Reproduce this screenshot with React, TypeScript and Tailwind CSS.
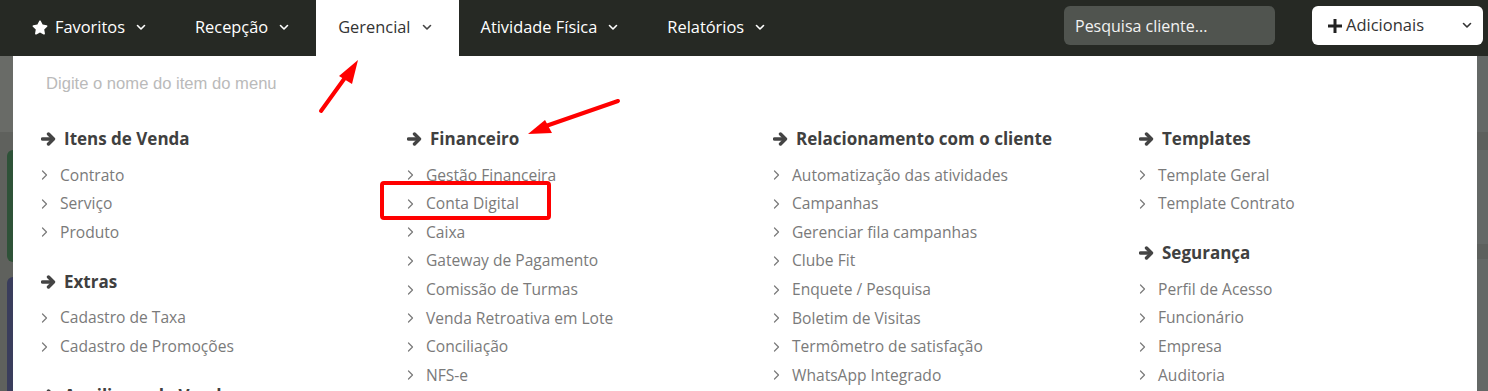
import React from "react";

const ChevDown = ({ color = "white" }: { color?: string }) => (
  <svg width="10" height="7" viewBox="0 0 10 7" className="shrink-0">
    <polyline points="1.5,1.5 5,5 8.5,1.5" fill="none" stroke={color} strokeWidth="1.6" strokeLinecap="round" strokeLinejoin="round" />
  </svg>
);

const ChevRight = () => (
  <svg width="7" height="10" viewBox="0 0 7 10" className="shrink-0">
    <polyline points="1.5,1 5.5,5 1.5,9" fill="none" stroke="#7a7a7a" strokeWidth="1.2" strokeLinecap="round" strokeLinejoin="round" />
  </svg>
);

const ArrowRight = () => (
  <svg width="15" height="14" viewBox="0 0 15 14" className="shrink-0">
    <path d="M1.5 7H11" stroke="#444" strokeWidth="3.4" strokeLinecap="round" />
    <polyline points="7.5,2 12.5,7 7.5,12" fill="none" stroke="#444" strokeWidth="3.4" strokeLinecap="round" strokeLinejoin="round" />
  </svg>
);

const Star = () => (
  <svg width="16" height="15" viewBox="0 0 576 512" className="shrink-0">
    <path fill="white" d="M259.3 17.8L194 150.2 47.9 171.5c-26.2 3.8-36.7 36.1-17.7 54.6l105.7 103-25 145.5c-4.5 26.3 23.2 46 46.4 33.7L288 439.6l130.7 68.7c23.2 12.2 50.9-7.4 46.4-33.7l-25-145.5 105.7-103c19-18.5 8.5-50.8-17.7-54.6L382 150.2 316.7 17.8c-11.7-23.6-45.6-23.9-57.4 0z" />
  </svg>
);

type Group = { title: string; items: string[] };

const columns: Group[][] = [
  [
    { title: "Itens de Venda", items: ["Contrato", "Serviço", "Produto"] },
    { title: "Extras", items: ["Cadastro de Taxa", "Cadastro de Promoções"] },
    { title: "Auxiliares de Venda", items: ["Desconto", "Convênio"] },
  ],
  [
    {
      title: "Financeiro",
      items: [
        "Gestão Financeira",
        "Conta Digital",
        "Caixa",
        "Gateway de Pagamento",
        "Comissão de Turmas",
        "Venda Retroativa em Lote",
        "Conciliação",
        "NFS-e",
      ],
    },
  ],
  [
    {
      title: "Relacionamento com o cliente",
      items: [
        "Automatização das atividades",
        "Campanhas",
        "Gerenciar fila campanhas",
        "Clube Fit",
        "Enquete / Pesquisa",
        "Boletim de Visitas",
        "Termômetro de satisfação",
        "WhatsApp Integrado",
      ],
    },
  ],
  [
    { title: "Templates", items: ["Template Geral", "Template Contrato"] },
    { title: "Segurança", items: ["Perfil de Acesso", "Funcionário", "Empresa", "Auditoria"] },
  ],
];

const navItems = [
  { label: "Favoritos", star: true },
  { label: "Recepção" },
  { label: "Gerencial", active: true },
  { label: "Atividade Física" },
  { label: "Relatórios" },
];

export default function App() {
  return (
    <div className="relative w-[1488px] h-[391px] overflow-hidden bg-white" style={{ fontFamily: "'Open Sans', sans-serif" }}>
      <nav className="flex h-[56px] items-stretch bg-[#262924] pl-[10px] pr-[5px]">
        {navItems.map((n) => (
          <div
            key={n.label}
            className={`flex items-center pb-[2px] pl-[22px] pr-[27px] text-[16.4px] ${n.active ? "bg-white text-[#333]" : "text-white"}`}
          >
            {n.star && (
              <span className="mr-[7px] flex items-center">
                <Star />
              </span>
            )}
            <span className="mr-[11px]">{n.label}</span>
            <ChevDown color={n.active ? "#444" : "white"} />
          </div>
        ))}
        <div className="ml-auto flex items-start pt-[6px]">
          <div className="flex h-[39px] w-[211px] items-center rounded-[6px] bg-[#50544f] pl-[11px] text-[16px] text-[#f2f2f2]">
            Pesquisa cliente...
          </div>
          <div className="ml-[37px] flex h-[39px] w-[171px] items-center rounded-[6px] bg-white pl-[14px] pr-[11px] text-[16.5px] text-[#333]">
            <svg width="18" height="18" viewBox="0 0 18 18" className="mr-[2px]">
              <path d="M9 2v14M2 9h14" stroke="#222" strokeWidth="3" />
            </svg>
            <span>Adicionais</span>
            <span className="ml-auto flex">
              <ChevDown color="#333" />
            </span>
          </div>
        </div>
      </nav>

      <div className="flex h-[335px]">
        <div className="relative w-[13px] shrink-0 bg-[#5f615d]">
          <div className="h-[76px] bg-[#696b67]" />
          <div className="absolute left-[7px] top-[94px] h-[112px] w-[6px] rounded-l-[6px] bg-[#2e5238]" />
          <div className="absolute left-[7px] top-[221px] h-[120px] w-[6px] rounded-l-[6px] bg-[#3a3d5c]" />
        </div>

        <div className="min-w-0 flex-1 overflow-hidden bg-white pl-[28px]">
          <div className="pl-[5px] pt-[17px] text-[16.6px] leading-[22px] text-[#bababa]" style={{ fontFamily: "'Liberation Sans', Arial, sans-serif" }}>
            Digite o nome do item do menu
          </div>
          <div className="mt-[32px] grid grid-cols-[366px_366px_366px_366px]">
            {columns.map((col, ci) => (
              <div key={ci} className="flex flex-col">
                {col.map((g, gi) => (
                  <div key={g.title} className={gi > 0 ? "mt-[23px]" : ""}>
                    <div className="mb-[10px] flex h-[24px] items-center text-[17px] font-bold text-[#404040]">
                      <span className="mr-[8px] flex">
                        <ArrowRight />
                      </span>
                      {g.title}
                    </div>
                    {g.items.map((it) => (
                      <div key={it} className="flex h-[28.6px] items-center text-[15.6px] text-[#7a7a7a]">
                        <span className="mr-[12px] flex">
                          <ChevRight />
                        </span>
                        {it}
                      </div>
                    ))}
                  </div>
                ))}
              </div>
            ))}
          </div>
        </div>

        <div className="relative w-[11px] shrink-0 bg-[#646866]">
          <div className="absolute left-0 top-[76px] h-[18px] w-full bg-[#5d605d]" />
          <div className="absolute left-0 top-[188px] h-[15px] w-full bg-[#5d605d]" />
        </div>
      </div>

      <svg className="pointer-events-none absolute left-0 top-0" width="1488" height="391" viewBox="0 0 1488 391">
        <line x1="321" y1="111" x2="347" y2="75" stroke="#ff0000" strokeWidth="4" strokeLinecap="round" />
        <polygon points="358,60 339,76 352,84" fill="#ff0000" />
        <line x1="618" y1="101" x2="543" y2="127" stroke="#ff0000" strokeWidth="4" strokeLinecap="round" />
        <polygon points="528,134 545,120 552,133" fill="#ff0000" />
        <rect x="382" y="183" width="167" height="35" rx="2" fill="none" stroke="#ff0000" strokeWidth="4" />
      </svg>
    </div>
  );
}
